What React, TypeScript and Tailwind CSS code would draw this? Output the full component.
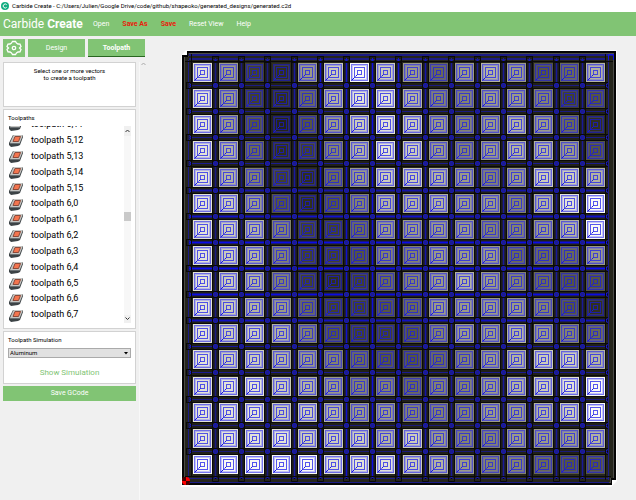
import React from "react";

const shades: number[][] = [
  [9, 6, 2, 1, 6, 8, 10, 8, 6, 4, 6, 7, 6, 3, 4, 7],
  [9, 6, 2, 1, 4, 7, 9, 9, 7, 5, 5, 6, 6, 5, 2, 3],
  [9, 6, 3, 0, 3, 6, 8, 9, 8, 6, 5, 6, 7, 6, 4, 1],
  [9, 7, 4, 1, 2, 5, 7, 9, 8, 6, 5, 6, 7, 7, 6, 3],
  [9, 7, 5, 2, 1, 4, 6, 8, 8, 7, 6, 5, 6, 8, 8, 7],
  [9, 8, 6, 3, 1, 3, 5, 7, 7, 7, 6, 6, 5, 7, 9, 10],
  [9, 8, 7, 5, 2, 2, 4, 6, 6, 6, 6, 5, 5, 6, 7, 10],
  [9, 8, 7, 5, 2, 2, 3, 5, 5, 6, 6, 6, 4, 4, 4, 6],
  [9, 8, 7, 5, 2, 1, 2, 4, 5, 6, 7, 6, 5, 4, 3, 3],
  [9, 8, 7, 6, 4, 2, 2, 3, 4, 6, 6, 6, 6, 5, 3, 1],
  [9, 8, 8, 7, 5, 3, 2, 2, 3, 5, 6, 6, 7, 6, 5, 4],
  [9, 8, 8, 7, 6, 5, 4, 3, 3, 4, 5, 6, 7, 8, 8, 7],
  [9, 9, 9, 8, 7, 6, 5, 5, 4, 5, 5, 6, 7, 8, 9, 10],
  [9, 9, 9, 8, 8, 7, 6, 6, 5, 5, 5, 6, 6, 7, 8, 10],
  [9, 9, 9, 9, 8, 8, 8, 7, 8, 6, 5, 5, 6, 6, 6, 7],
  [10, 10, 10, 10, 10, 9, 9, 9, 8, 7, 6, 5, 5, 4, 3, 3],
];
const fills = ["#24241a", "#30301f", "#414132", "#555544", "#6a6a58", "#828270", "#9a9a88", "#b2b2a2", "#cacabc", "#e2e2d8", "#fafaf4"];
const lines = ["#1a1a9c", "#1e1ea6", "#2424b0", "#2a2abb", "#3030c4", "#3838cc", "#3e3ed4", "#4444dc", "#4a4ae2", "#5050e6", "#5555ee"];
const blues = ["#1b1b80", "#1b1b80", "#1b1b80", "#1a1aa0", "#1212cc", "#1212cc", "#0f0fe0", "#1212cc", "#1616a8", "#1a1a98", "#1b1b90", "#1a1a98", "#1a1a98", "#1a1a98", "#1a1a98"];
const rowBlues = ["#1b1b80", "#1b1b80", "#1b1b88", "#1b1b90", "#1616a8", "#1212cc", "#0c0ce8", "#0c0cf0", "#0c0ce0", "#1212c0", "#1818a0", "#1b1b90", "#1b1b80", "#1b1b78", "#1b1b78"];
const pitchX = (i: number) => Math.round((i * 393) / 15);
const pitchY = (i: number) => Math.round((i * 392) / 15);

function Cell({ x, y, shade }: { x: number; y: number; shade: number }) {
  const c = lines[shade];
  return (
    <g>
      <rect x={x} y={y} width="19" height="19" fill={fills[shade]} />
      <rect x={x + 1.5} y={y + 1.5} width="16" height="16" fill="none" stroke={c} strokeOpacity="0.8" />
      <rect x={x + 2.5} y={y + 2.5} width="14" height="14" fill="none" stroke="#4646ff" strokeOpacity="0.3" />
      <rect x={x + 4.5} y={y + 4.5} width="10" height="10" fill="none" stroke={c} />
      <rect x={x + 7.5} y={y + 7.5} width="4" height="4" fill="none" stroke={c} />
      <path d={`M${x + 1.5} ${y + 17.5}l3-3m1-1l2-2`} stroke="#1414e0" fill="none" />
    </g>
  );
}

function Board() {
  const gaps = Array.from({ length: 15 }, (_, i) => i);
  return (
    <svg viewBox="0 0 436 437" className="block w-full" role="img" aria-label="Toolpath design">
      <path d="M5 0H436V431L430 437H0V6Z" fill="#fff" />
      <path d="M6 1H435V430H431V435H1V5H6Z" fill="#050505" />
      <path d="M7 3H433V428H430V433H3V7H7Z" fill="#4b4b48" />
      <path d="M8 4H432V428H429V432H4V7H8Z" fill="#25251c" />
      <path d="M2 6.5H7V2" stroke="#000" fill="none" />
      <path d="M8 5H432M8 9H424" stroke="#1c1c85" strokeWidth="2" />
      <path d="M7.5 10V428M427.5 10V430M4 428.5H428M4 432.5H428" stroke="#1c1c85" fill="none" />
      {gaps.map((i) => {
        const p = 34.5 + pitchX(i);
        return (
          <g key={i}>
            <rect x={p - 3} y={6.5} width="6" height="422" fill="#1d1d18" stroke="#0a0a08" />
            <path d={`M${p} 9V426`} stroke={blues[i]} strokeWidth="3" strokeOpacity="0.3" />
          </g>
        );
      })}
      {gaps.map((i) => {
        const p = 35.5 + pitchY(i);
        return (
          <g key={i}>
            <rect x={5.5} y={p - 3} width="421" height="6" fill="#1d1d18" fillOpacity="0.55" stroke="#0a0a08" />
            <path d={`M8 ${p}H426`} stroke={rowBlues[i]} strokeWidth={i > 3 && i < 10 ? 2 : 1} />
            <rect x={5.5} y={p - 3} width="5" height="6" fill="none" stroke="#0a0a08" />
            <path d={`M8 ${p - 2}l3 2l-3 2M427 ${p - 2}l-3 2l3 2`} stroke="#1919d0" fill="none" />
          </g>
        );
      })}
      {gaps.map((i) => (
        <path key={i} d={`M${34.5 + pitchX(i)} 8V428`} stroke={blues[i]} />
      ))}
      {gaps.map((r) =>
        gaps.map((c) => {
          const x = 34.5 + pitchX(c);
          const y = 35.5 + pitchY(r);
          return (
            <g key={`${r}-${c}`}>
              <rect x={x - 3} y={y - 3} width="6" height="6" fill="none" stroke="#0a0a08" />
              <path d={`M${x - 1} ${y - 2}h2l1 1v2l-1 1h-2l-1-1v-2Z`} fill="#1c1c90" stroke="#1818b8" />
            </g>
          );
        }),
      )}
      {gaps.map((i) => {
        const p = 34.5 + pitchX(i);
        return (
          <g key={i} fill="none">
            <path d={`M${p - 3} 6.5h6v6h-6ZM${p - 3} 426.5h6v5h-6Z`} stroke="#0a0a08" />
            <path d={`M${p - 2} 9l2 2l2-2M${p - 2} 429l2-2l2 2`} stroke="#1919d0" />
          </g>
        );
      })}
      <path d="M4 11.5H432M10.500 4V426M4 426.500H430M424.500 4V430" stroke="#0a0a08" fill="none" />
      <path d="M427.500 10V4.500H432.500V10" stroke="#1111e0" fill="none" />
      {shades.map((row, r) => row.map((s, c) => <Cell key={`${r}-${c}`} x={12 + pitchX(c)} y={13 + pitchY(r)} shade={s} />))}
      <circle cx="5" cy="431" r="4" fill="#f00" />
      <path d="M5 431V427H2Q1 429 1 431ZM5 431H9Q9 434 6 435H5Z" fill="#400" />
    </svg>
  );
}

function PocketIcon() {
  return (
    <svg viewBox="0 0 15 13" className="h-[13px] w-[15px]" aria-hidden="true">
      <path d="M0 9L4 1H14V3L11 11L9 12L2 13L0 11Z" fill="#3c4346" />
      <path d="M1 9L4.500 1H14L10.500 9.500Z" fill="#c5c5c2" />
      <path d="M1 9.500H10.500" stroke="#6a7073" fill="none" />
      <path d="M4 7.500L6 2.500H11.500L9.500 7.500Z" fill="#f4754f" stroke="#8b4a3a" />
    </svg>
  );
}

function Chevron({ down = false, dim = false }: { down?: boolean; dim?: boolean }) {
  return (
    <svg viewBox="0 0 5 4" className="h-1 w-[5px]" aria-hidden="true">
      <path d={down ? "M.5 .5L2.500 2.500L4.500 .5" : "M.5 3L2.500 1L4.500 3"} stroke={dim ? "#aaa" : "#333"} fill="none" />
    </svg>
  );
}

const toolpaths = ["5,11", "5,12", "5,13", "5,14", "5,15", "6,0", "6,1", "6,2", "6,3", "6,4", "6,5", "6,6", "6,7"];

export default function App() {
  return (
    <div className="flex min-h-screen flex-col bg-[#f0f0f0] font-['Roboto',sans-serif] text-black">
      <header>
        <div className="flex h-3 items-center gap-[3px] bg-white pl-px text-[6px] leading-3 whitespace-nowrap">
          <svg viewBox="0 0 8 8" className="size-2" aria-hidden="true">
            <circle cx="4" cy="4" r="4" fill="#12ad82" />
            <path d="M5.700 2.700A2 2 0 1 0 5.700 5.300" stroke="#fff" fill="none" />
          </svg>
          Carbide Create - C:/Users/Julien/Google Drive/code/github/shapeoko/generated_designs/generated.c2d
        </div>
        <div className="flex h-6 items-center bg-[#81c474] pl-[3px] whitespace-nowrap text-white">
          <h1 className="w-[90px] text-[12px] leading-6">
            Carbide <b>Create</b>
          </h1>
          <nav className="flex gap-[13px] text-[7px] leading-6">
            <button>Open</button>
            <button className="font-bold text-[#e8200c]">Save As</button>
            <button className="font-bold text-[#e8200c]">Save</button>
            <button>Reset View</button>
            <button>Help</button>
          </nav>
        </div>
      </header>
      <div className="flex flex-1">
        <aside className="flex w-[147px] shrink-0 flex-col pt-[3px]">
          <div className="flex h-[18px] gap-[3px] pl-[3px] text-[7px] text-white">
            <button aria-label="Settings" className="flex w-[22px] items-center justify-center bg-[#81c474]">
              <svg viewBox="0 0 16 16" className="size-4" fill="none" stroke="#fff" strokeWidth="1.300" aria-hidden="true">
                <path d="M5.500 3L6.500 1.500H9.500L10.500 3L12 4L14 4.200L15 6.500L13.500 8L15 9.500L14 11.800L12 12L10.500 13L9.500 14.500H6.500L5.500 13L4 12L2 11.800L1 9.500L2.500 8L1 6.500L2 4.200L4 4Z" />
                <circle cx="8" cy="8" r="1.700" />
              </svg>
            </button>
            <button className="w-[57px] bg-[#81c474]">Design</button>
            <button className="w-[57px] bg-[#81c474] font-bold shadow-[inset_0_-1px_0_#286620]">Toolpath</button>
          </div>
          <div className="mt-[5px] flex flex-1">
            <div className="flex w-[140px] flex-col gap-0.5 border-r border-[#f8f8f8] pr-[3px] pl-[3px]">
              <section className="h-[45px] border border-[#d2d2d2] bg-white pt-1 text-center text-[6px] leading-[7px]">
                Select one or more vectors
                <br />
                to create a toolpath
              </section>
              <section className="h-[220px] border border-[#d2d2d2] bg-white pt-1 pr-1">
                <h2 className="pl-1 text-[6px] leading-2">Toolpaths</h2>
                <div className="mt-1 flex h-[197px]">
                  <div className="flex flex-1 flex-col justify-end overflow-hidden">
                    <ul className="grid h-[206px] shrink-0 auto-rows-fr text-[9px]">
                      {toolpaths.map((t) => (
                        <li key={t} className="flex min-h-0 items-center gap-[7px] pl-[5px]">
                          <PocketIcon />
                          toolpath {t}
                        </li>
                      ))}
                    </ul>
                  </div>
                  <div className="flex w-[7px] flex-col items-center">
                    <div className="flex h-[10px] w-full items-center justify-center bg-[#f0f0f0]"><Chevron /></div>
                    <div className="w-full flex-1 bg-[#f7f7f7] pt-[76px]">
                      <div className="h-[9px] bg-[#c9c9c9]" />
                    </div>
                    <div className="flex h-2 w-full items-center justify-center bg-[#f0f0f0]"><Chevron down /></div>
                  </div>
                </div>
              </section>
              <section className="flex h-[53px] flex-col border border-[#d2d2d2] bg-white px-1 pt-1">
                <label htmlFor="material" className="text-[6px] leading-2">Toolpath Simulation</label>
                <div className="relative mt-1 h-[10px]">
                  <select id="material" className="block h-[10px] w-full appearance-none border border-[#aaa] bg-[#e1e1e1] pl-px text-[6px] leading-2">
                    <option>Aluminum</option>
                  </select>
                  <svg viewBox="0 0 4 3" className="pointer-events-none absolute top-[4px] right-[3px] h-[3px] w-1" aria-hidden="true">
                    <path d="M0 0H4L2 2.500Z" />
                  </svg>
                </div>
                <button className="mt-2 text-[8px] leading-[13px] text-[#81c474]">Show Simulation</button>
              </section>
              <button className="h-[15px] bg-[#81c474] text-[7px] leading-[15px] text-white">Save GCode</button>
            </div>
            <div className="flex w-[7px] justify-center"><Chevron dim /></div>
          </div>
        </aside>
        <main className="flex-1 pt-[14px] pr-[19px] pl-[34px]">
          <Board />
        </main>
      </div>
    </div>
  );
}
